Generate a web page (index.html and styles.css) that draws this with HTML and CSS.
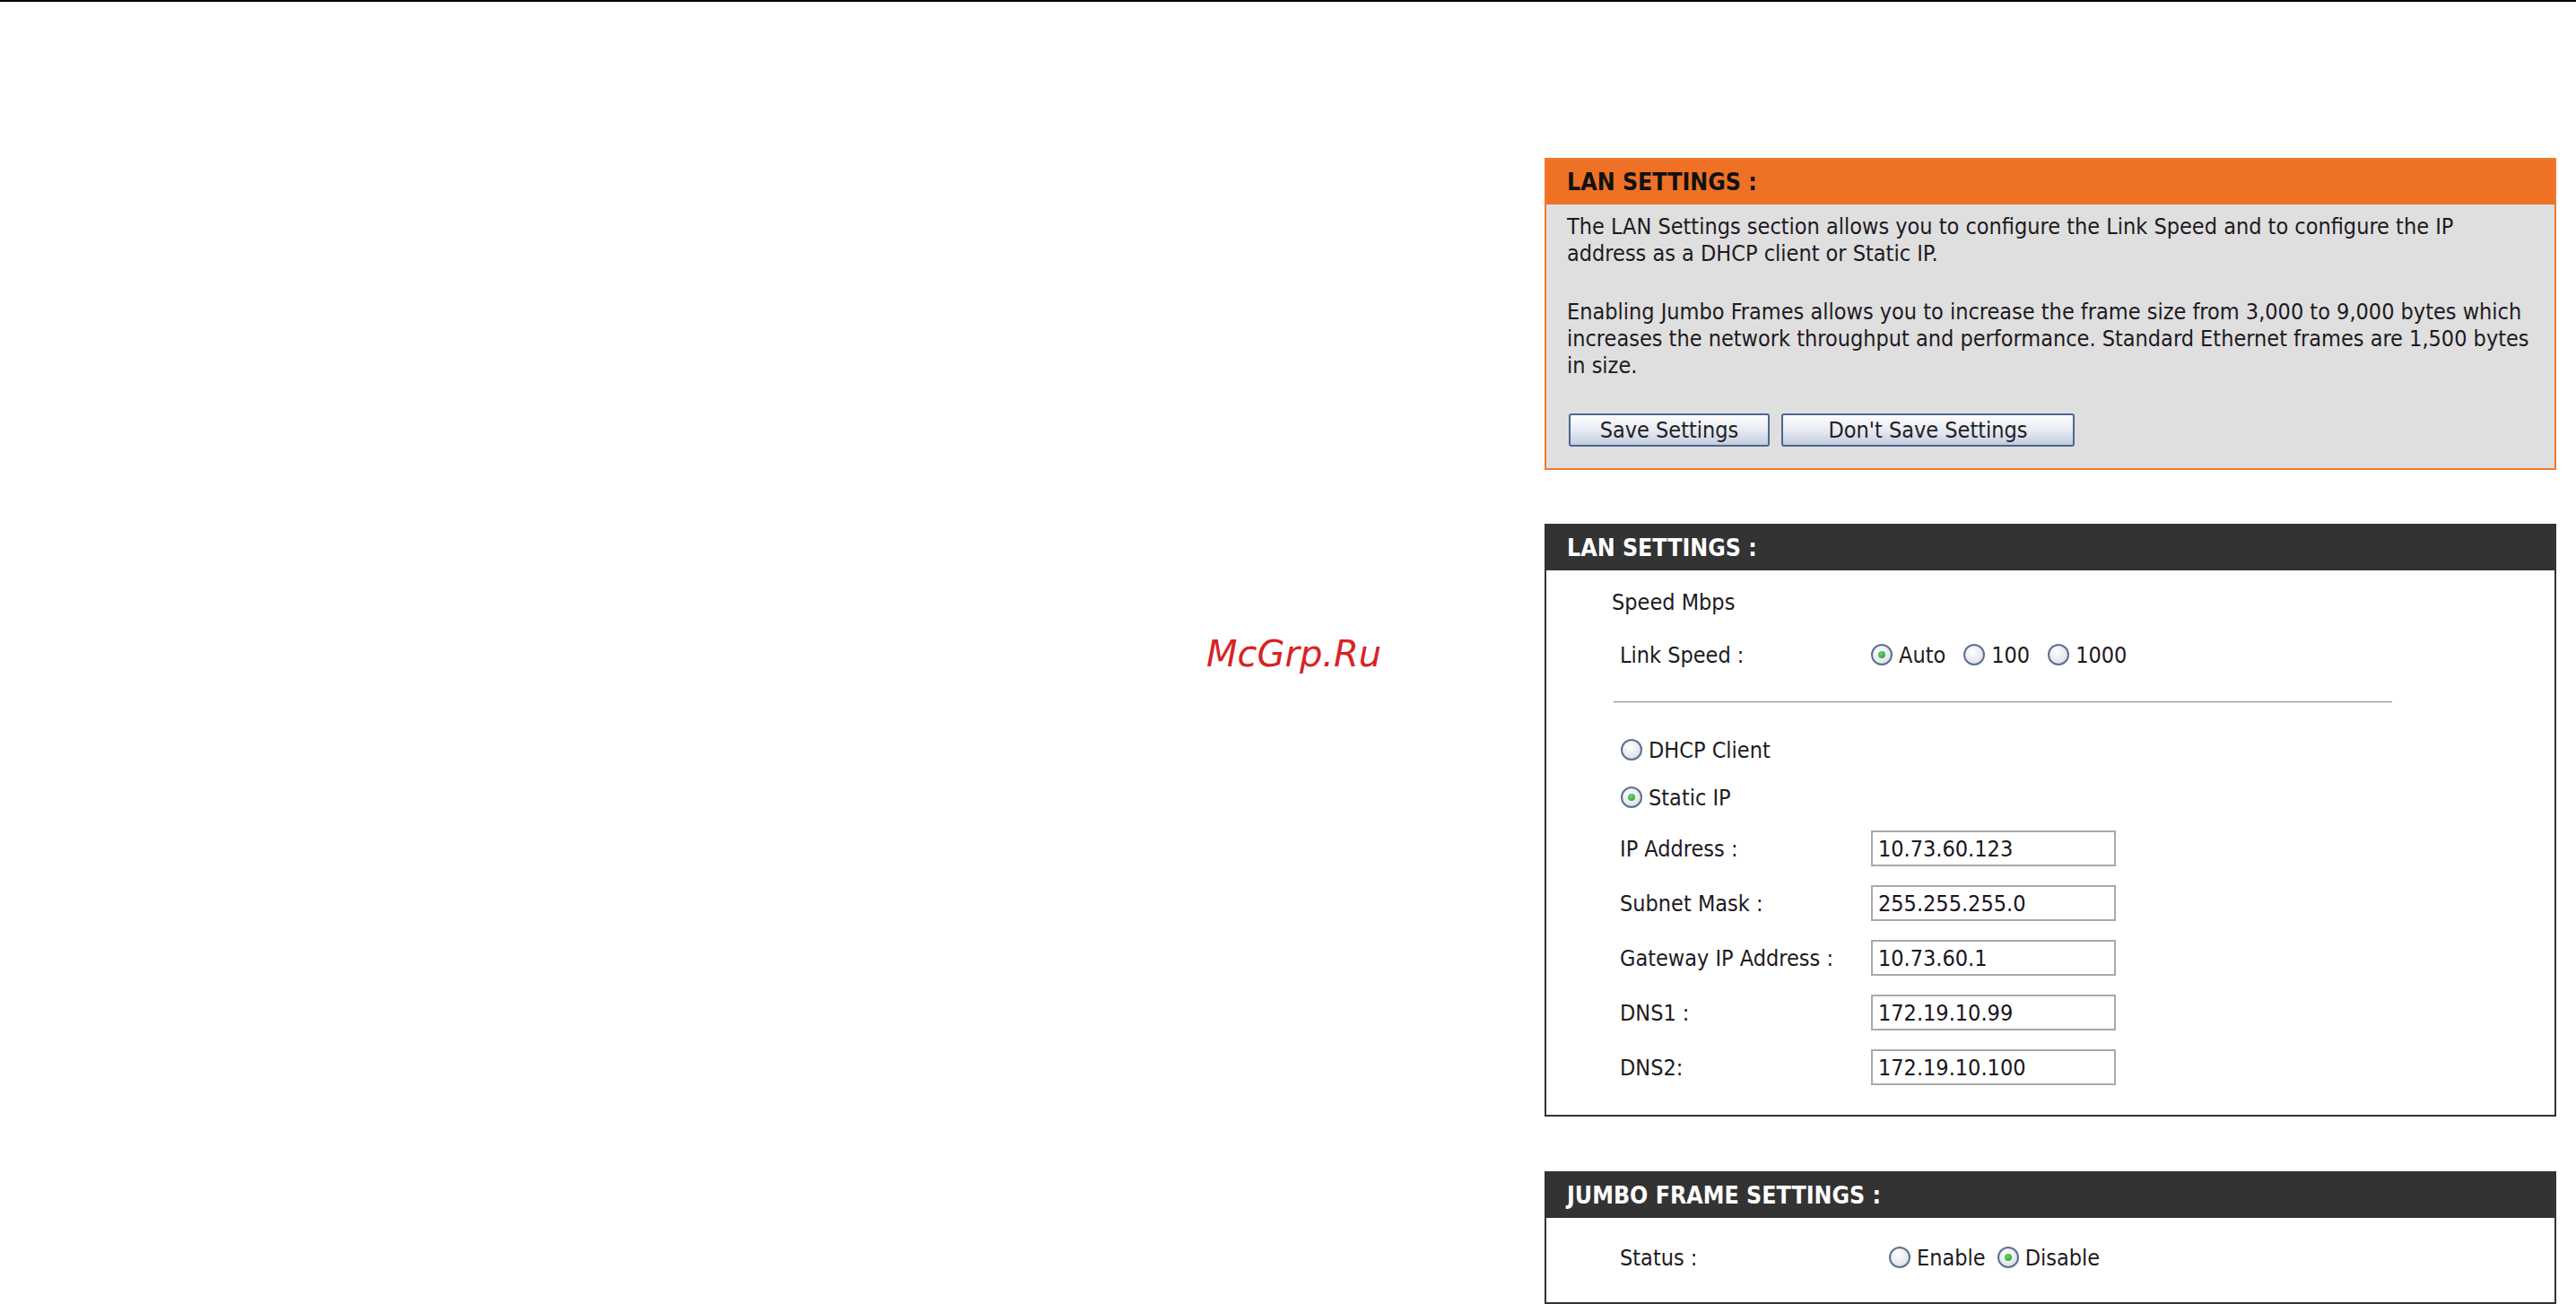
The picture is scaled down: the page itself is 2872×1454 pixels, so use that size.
FILE: index.html
```html
<!DOCTYPE html>
<html lang="en">
<head>
    <meta charset="UTF-8">
    <title>LAN Settings</title>
    <link rel="stylesheet" href="styles.css">
</head>
<body>
<div class="page">
    <div class="side">
        <div class="stamp">McGrp.Ru</div>
    </div>

    <div class="main">
        <div class="box box-orange">
            <div class="box-head">LAN SETTINGS :</div>
            <div class="box-body">
                <p>The LAN Settings section allows you to configure the Link Speed and to configure the IP<br>address as a DHCP client or Static IP.</p>
                <p>Enabling Jumbo Frames allows you to increase the frame size from 3,000 to 9,000 bytes which<br>increases the network throughput and performance. Standard Ethernet frames are 1,500 bytes<br>in size.</p>
                <div class="buttons">
                    <button class="btn btn-save">Save Settings</button>
                    <button class="btn btn-nosave">Don't Save Settings</button>
                </div>
            </div>
        </div>

        <div class="box box-dark">
            <div class="box-head">LAN SETTINGS :</div>
            <div class="box-body form">
                <div class="row row-title">Speed Mbps</div>
                <div class="row row-link">
                    <span class="label">Link Speed :</span>
                    <span class="opts">
                        <label class="opt"><input type="radio" name="speed" checked>Auto</label>
                        <label class="opt"><input type="radio" name="speed">100</label>
                        <label class="opt"><input type="radio" name="speed">1000</label>
                    </span>
                </div>
                <div class="rule"></div>
                <div class="row row-mode">
                    <label class="opt"><input type="radio" name="mode">DHCP Client</label>
                </div>
                <div class="row row-mode row-static">
                    <label class="opt"><input type="radio" name="mode" checked>Static IP</label>
                </div>
                <div class="fields">
                    <div class="row">
                        <span class="label">IP Address :</span>
                        <input class="field" type="text" value="10.73.60.123">
                    </div>
                    <div class="row">
                        <span class="label">Subnet Mask :</span>
                        <input class="field" type="text" value="255.255.255.0">
                    </div>
                    <div class="row">
                        <span class="label">Gateway IP Address :</span>
                        <input class="field" type="text" value="10.73.60.1">
                    </div>
                    <div class="row">
                        <span class="label">DNS1 :</span>
                        <input class="field" type="text" value="172.19.10.99">
                    </div>
                    <div class="row">
                        <span class="label">DNS2:</span>
                        <input class="field" type="text" value="172.19.10.100">
                    </div>
                </div>
            </div>
        </div>

        <div class="box box-dark box-jumbo">
            <div class="box-head">JUMBO FRAME SETTINGS :</div>
            <div class="box-body form">
                <div class="row">
                    <span class="label label-status">Status :</span>
                    <span class="opts">
                        <label class="opt"><input type="radio" name="jumbo">Enable</label>
                        <label class="opt"><input type="radio" name="jumbo" checked>Disable</label>
                    </span>
                </div>
            </div>
        </div>
    </div>
</div>
</body>
</html>
```

FILE: styles.css
```css
html, body {
    margin: 0;
    padding: 0;
    background: #fff;
    overflow: hidden;
}
body {
    font-family: "DejaVu Sans Condensed", "DejaVu Sans", sans-serif;
    font-stretch: condensed;
    font-size: 25px;
    color: #1e1a22;
}
.page {
    display: flex;
    border-top: 2px solid #000;
    height: 1452px;
}
.side {
    width: 1722px;
    flex: none;
}
.stamp {
    margin-top: 703px;
    padding-left: 1345px;
    font-family: "DejaVu Sans", sans-serif;
    font-stretch: normal;
    font-style: oblique;
    font-size: 40px;
    line-height: 48px;
    color: #d62424;
}
.main {
    width: 1128px;
    flex: none;
    padding-top: 174px;
}

/* boxes */
.box {
    border: 2px solid #333;
    margin-bottom: 61px;
}
.box-head {
    height: 50px;
    line-height: 50px;
    padding-left: 23px;
    font-weight: bold;
    font-size: 26.5px;
    background: #333;
    color: #fff;
}
.box-orange {
    border-color: #f07a2e;
    margin-bottom: 60px;
}
.box-orange .box-head {
    background: #ee7126;
    color: #111;
}
.box-orange .box-body {
    background: #dfdfdf;
    padding: 10px 10px 24px 23px;
}
.box-body p {
    margin: 0 0 35px 0;
    line-height: 30px;
}
.buttons {
    display: flex;
    gap: 13px;
    margin-top: 38px;
    padding-left: 2px;
}
.btn {
    height: 37px;
    font-family: inherit;
    font-stretch: condensed;
    font-size: 25px;
    color: #222;
    border: 2px solid #4d6690;
    border-radius: 3px;
    background: linear-gradient(#fdfdfe, #e4e9f2 55%, #c3cbdc);
    padding: 0;
}
.btn-save {
    width: 224px;
}
.btn-nosave {
    width: 327px;
}

/* form box */
.form {
    padding: 13px 0 31px 82px;
}
.row {
    display: flex;
    align-items: center;
    height: 44px;
}
.row-title {
    margin-left: -9px;
}
.row-link {
    margin-top: 15px;
}
.label {
    width: 280px;
    flex: none;
}
.opts {
    display: flex;
    gap: 20px;
}
.opt {
    display: flex;
    align-items: center;
}
.opt input {
    appearance: none;
    -webkit-appearance: none;
    box-sizing: border-box;
    width: 24px;
    height: 24px;
    margin: 0 7px 0 0;
    border: 2px solid #5d7190;
    border-radius: 50%;
    background: radial-gradient(circle at 40% 35%, #fff, #e6e8ec 60%, #c4c8d0);
    display: grid;
    place-items: center;
}
.opt input:checked::after {
    content: "";
    width: 8px;
    height: 8px;
    border-radius: 50%;
    background: radial-gradient(circle at 40% 35%, #6fd36f, #1f9a2c);
}
.rule {
    width: 868px;
    height: 1px;
    margin: 30px 0 0 -7px;
    background: #9a9a9a;
    border-bottom: 1px solid #e2e2e2;
}
.row-mode {
    margin-top: 30px;
    padding-left: 1px;
}
.row-static {
    margin-top: 9px;
}
.fields {
    display: flex;
    flex-direction: column;
    gap: 17px;
    margin-top: 13px;
}
.field {
    width: 273px;
    height: 40px;
    box-sizing: border-box;
    border: 2px solid #a9a9a9;
    padding: 0 0 0 6px;
    font-family: inherit;
    font-stretch: condensed;
    font-size: 25px;
    color: #1a1420;
    background: #fff;
}

/* jumbo */
.box-jumbo {
    margin-bottom: 0;
}
.box-jumbo .form {
    padding-top: 22px;
    padding-bottom: 28px;
}
.label-status {
    width: 300px;
}
.box-jumbo .opts {
    gap: 13px;
}
```
